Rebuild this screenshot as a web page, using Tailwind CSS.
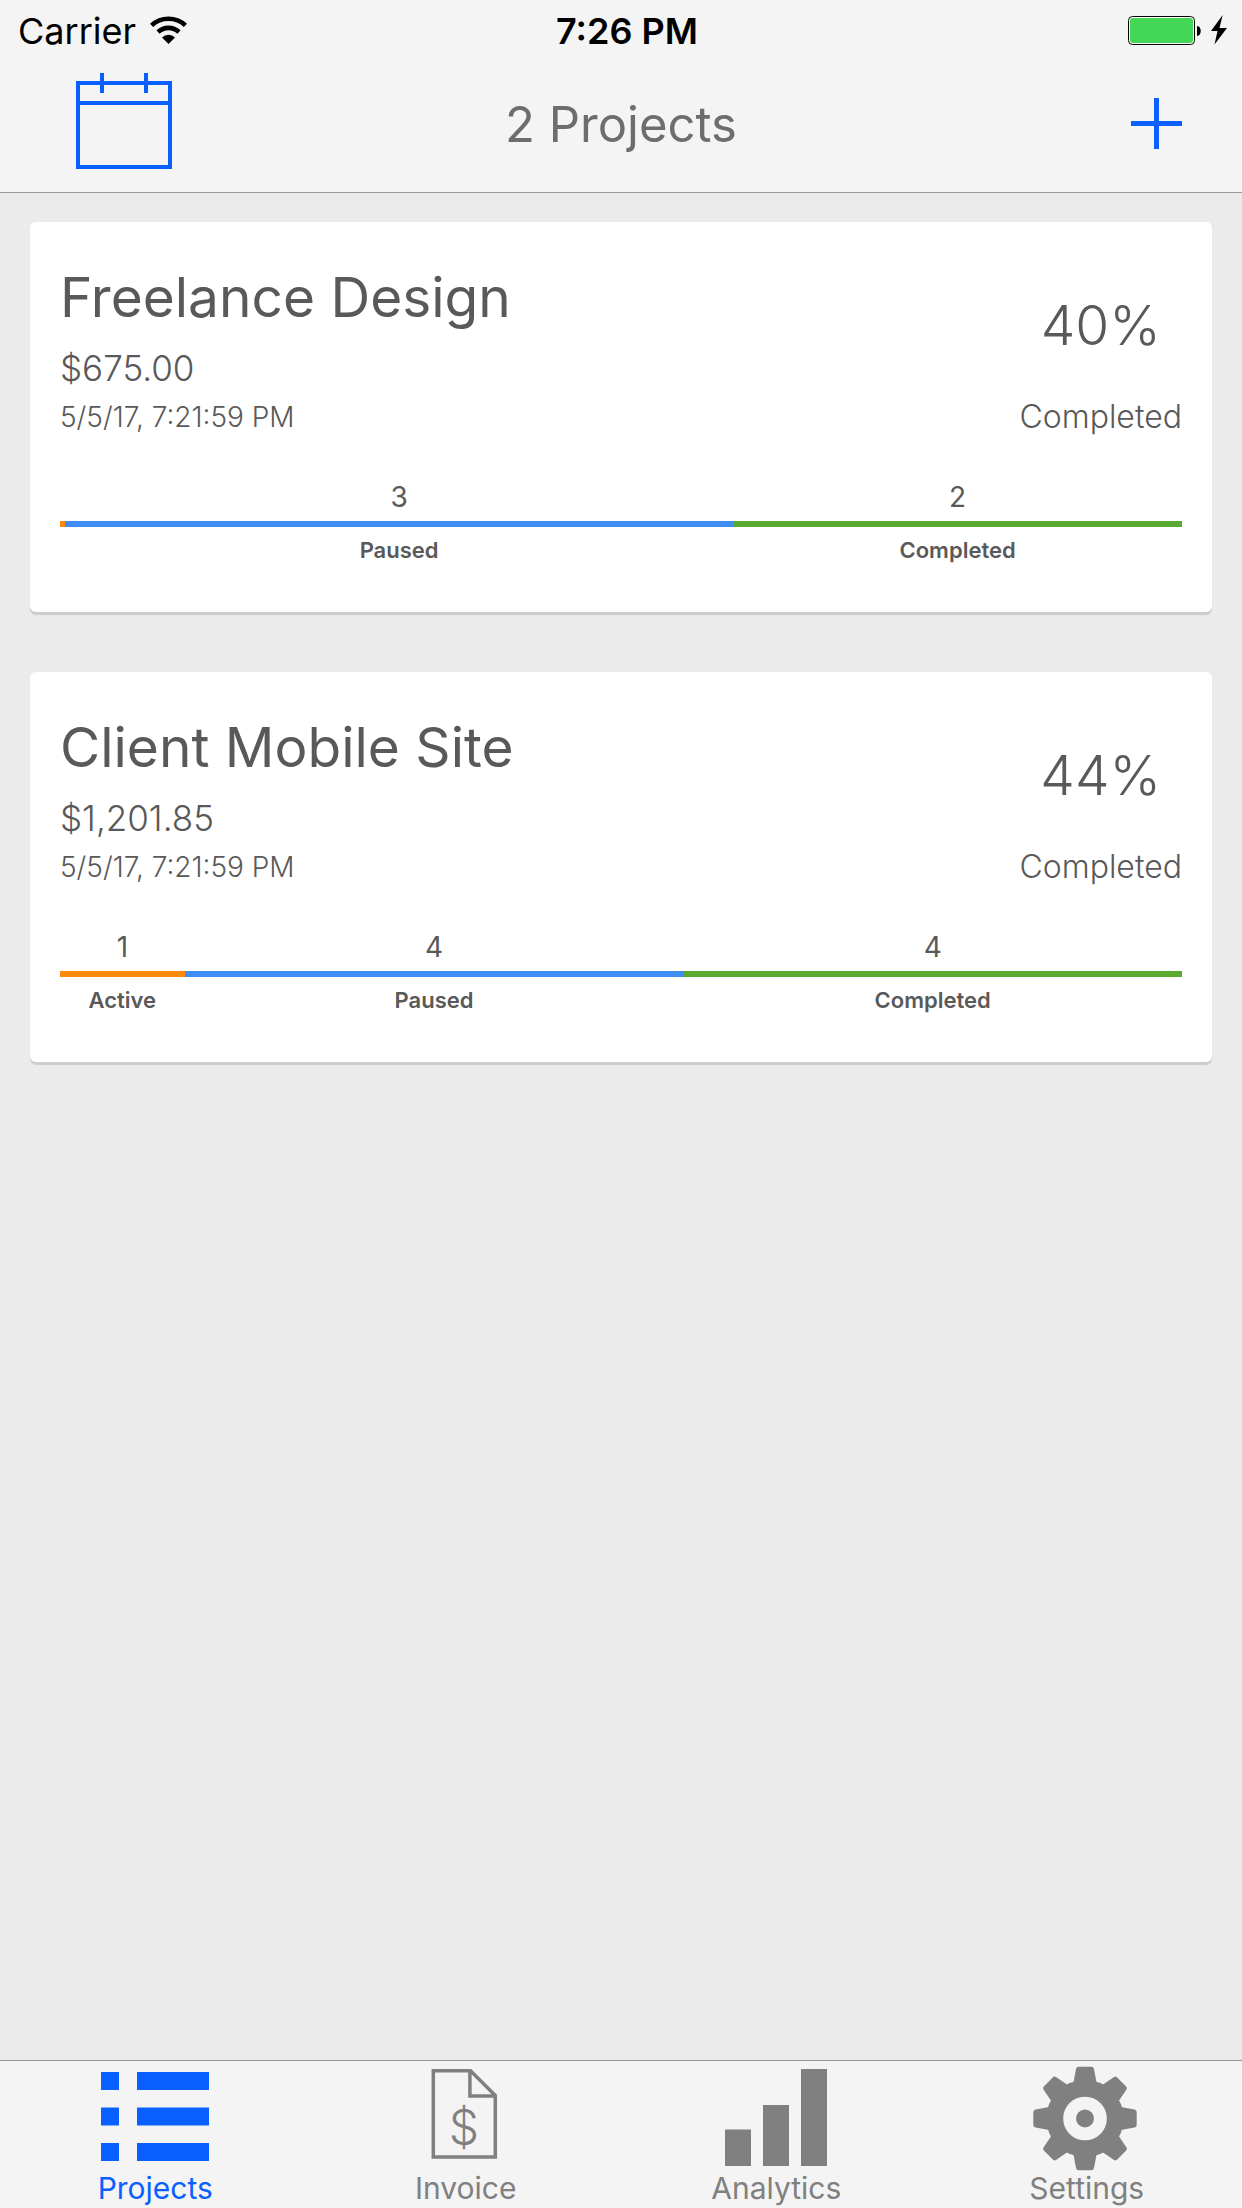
<!DOCTYPE html>
<html lang="en">
<head>
<meta charset="utf-8">
<meta name="viewport" content="width=device-width, initial-scale=1">
<title>Projects</title>
<script src="https://cdn.jsdelivr.net/npm/@tailwindcss/browser@4"></script>
</head>
<body class="flex min-h-screen flex-col bg-[#ebebeb] font-['Inter',sans-serif] text-[#595959]">

<header class="border-b border-[#989898] bg-[#f4f4f4] pb-2">
  <!-- Status bar -->
  <div class="grid h-[62px] grid-cols-[1fr_auto_1fr] items-center pr-[14px] pl-[18px] text-[36px] leading-[44px] text-black">
    <div class="flex items-center gap-[14px]">
      <span>Carrier</span>
      <svg class="h-[30px] w-[37px]" viewBox="0 0 37 30" aria-label="Wi-Fi" role="img">
        <g fill="none" stroke="#000" stroke-width="4.6">
          <path d="M1.6 9.4A25 25 0 0 1 35.4 9.4"/>
          <path d="M8 16A15.4 15.4 0 0 1 29 16"/>
        </g>
        <path d="M12 21.6A9 9 0 0 1 25 21.6L18.5 28Z"/>
      </svg>
    </div>
    <span class="pl-2 font-semibold">7:26 PM</span>
    <svg class="h-[32px] w-[100px] justify-self-end" viewBox="0 0 100 32" aria-label="Battery charging" role="img">
      <rect x=".5" y="1.5" width="66" height="28" rx="4" fill="#fff" stroke="#000"/>
      <rect x="2" y="3" width="63" height="25" rx="3" fill="#44d755"/>
      <path d="M69 11c5 0 5 10 0 10Z"/>
      <path d="M94.700 0L83 16h6.500L86.500 29.500L99 13h-7.500Z"/>
    </svg>
  </div>
  <!-- Navigation bar -->
  <div class="grid h-[122px] grid-cols-[1fr_auto_1fr] items-center pr-[60px] pl-[76px]">
    <button type="button" aria-label="Calendar" class="justify-self-start text-[#0a60ff]">
      <svg class="block h-[100px] w-[96px]" viewBox="0 0 96 100" fill="none" stroke="currentColor" stroke-width="4">
        <rect x="2" y="10" width="92" height="84"/>
        <path d="M2 30H94M26 0V20M70 0V20"/>
      </svg>
    </button>
    <h1 class="-ml-4 pt-1 text-[49px] leading-[60px] text-[#6d6d6d]">2 Projects</h1>
    <button type="button" aria-label="Add project" class="justify-self-end text-[#0a60ff]">
      <svg class="block h-[51px] w-[51px]" viewBox="0 0 51 51" fill="none" stroke="currentColor" stroke-width="5">
        <path d="M0 25.500H51M25.500 0V51"/>
      </svg>
    </button>
  </div>
</header>

<main class="flex flex-1 flex-col gap-[60px] px-[30px] pt-[29px] pb-[60px]">

  <article class="rounded-md bg-white px-[30px] py-[45px] shadow-[0_3px_1px_#cdcdcd]">
    <div class="flex items-end justify-between">
      <div>
        <h2 class="text-[55px] leading-[60px]">Freelance Design</h2>
        <p class="mt-5 text-[35px] leading-[42px] font-light">$675.00</p>
        <p class="mt-2 text-[28px] leading-[40px] font-light">5/5/17, 7:21:59 PM</p>
      </div>
      <div class="flex flex-col items-center gap-[42px] font-light">
        <p class="text-[55px] leading-[60px]">40%</p>
        <p class="text-[32px] leading-[40px]">Completed</p>
      </div>
    </div>
    <div class="mt-[42px] flex items-start text-center">
      <div class="w-[5px] pt-[42px]"><div class="h-[6px] bg-[#ff890d]"></div></div>
      <div class="flex-1">
        <p class="text-[28px] leading-[36px]">3</p>
        <div class="my-[6px] h-[6px] bg-[#3f8cf4]"></div>
        <p class="text-[22px] leading-[34px] font-semibold">Paused</p>
      </div>
      <div style="width:40%">
        <p class="text-[28px] leading-[36px]">2</p>
        <div class="my-[6px] h-[6px] bg-[#5aaa32]"></div>
        <p class="text-[22px] leading-[34px] font-semibold">Completed</p>
      </div>
    </div>
  </article>

  <article class="rounded-md bg-white px-[30px] py-[45px] shadow-[0_3px_1px_#cdcdcd]">
    <div class="flex items-end justify-between">
      <div>
        <h2 class="text-[55px] leading-[60px]">Client Mobile Site</h2>
        <p class="mt-5 text-[35px] leading-[42px] font-light">$1,201.85</p>
        <p class="mt-2 text-[28px] leading-[40px] font-light">5/5/17, 7:21:59 PM</p>
      </div>
      <div class="flex flex-col items-center gap-[42px] font-light">
        <p class="text-[55px] leading-[60px]">44%</p>
        <p class="text-[32px] leading-[40px]">Completed</p>
      </div>
    </div>
    <div class="mt-[42px] flex items-start text-center">
      <div style="width:11.11%">
        <p class="text-[28px] leading-[36px]">1</p>
        <div class="my-[6px] h-[6px] bg-[#ff890d]"></div>
        <p class="text-[22px] leading-[34px] font-semibold">Active</p>
      </div>
      <div class="flex-1">
        <p class="text-[28px] leading-[36px]">4</p>
        <div class="my-[6px] h-[6px] bg-[#3f8cf4]"></div>
        <p class="text-[22px] leading-[34px] font-semibold">Paused</p>
      </div>
      <div style="width:44.44%">
        <p class="text-[28px] leading-[36px]">4</p>
        <div class="my-[6px] h-[6px] bg-[#5aaa32]"></div>
        <p class="text-[22px] leading-[34px] font-semibold">Completed</p>
      </div>
    </div>
  </article>

</main>

<!-- Tab bar -->
<nav class="grid grid-cols-4 border-t border-[#989898] bg-[#f4f4f4] text-[30px] leading-[40px] text-[#808080]">
  <a href="#projects" aria-current="page" class="flex flex-col items-center text-[#0a60ff]">
    <svg class="h-[107px] w-[110px]" viewBox="0 0 110 107" fill="currentColor">
      <path d="M1 11h18v18H1ZM37 11h72v18H37ZM1 46.500h18v18H1ZM37 46.500h72v18H37ZM1 82h18v18H1ZM37 82h72v18H37Z"/>
    </svg>
    <span>Projects</span>
  </a>
  <a href="#invoice" class="flex flex-col items-center">
    <svg class="h-[107px] w-[110px]" viewBox="0 0 110 107">
      <path d="M22.300 9.700H59.500L84.300 34.500V96H22.300ZM58.900 9.700V35H84.300" fill="none" stroke="currentColor" stroke-width="3.500"/>
      <text x="53" y="83" text-anchor="middle" fill="currentColor" class="text-[48px] font-light">$</text>
    </svg>
    <span>Invoice</span>
  </a>
  <a href="#analytics" class="flex flex-col items-center">
    <svg class="h-[107px] w-[110px]" viewBox="0 0 110 107" fill="currentColor">
      <path d="M4 68.500h26V105H4ZM42 44h26v61H42ZM80 8h26v97H80Z"/>
    </svg>
    <span>Analytics</span>
  </a>
  <a href="#settings" class="flex flex-col items-center">
    <svg class="h-[107px] w-[110px] overflow-visible" viewBox="0 0 110 107" fill="currentColor">
      <defs><path id="tooth" d="M-11.500 -36L-9 -49.500Q-8.500 -51.700 -6.500 -51.700H6.500Q8.500 -51.700 9 -49.500L11.500 -36Z"/></defs>
      <g transform="translate(53 57.500)">
        <circle r="30.200" fill="none" stroke="currentColor" stroke-width="16.800"/>
        <circle r="9"/>
        <use href="#tooth"/>
        <use href="#tooth" transform="rotate(45)"/>
        <use href="#tooth" transform="rotate(90)"/>
        <use href="#tooth" transform="rotate(135)"/>
        <use href="#tooth" transform="rotate(180)"/>
        <use href="#tooth" transform="rotate(225)"/>
        <use href="#tooth" transform="rotate(270)"/>
        <use href="#tooth" transform="rotate(315)"/>
      </g>
    </svg>
    <span>Settings</span>
  </a>
</nav>
</body>
</html>
